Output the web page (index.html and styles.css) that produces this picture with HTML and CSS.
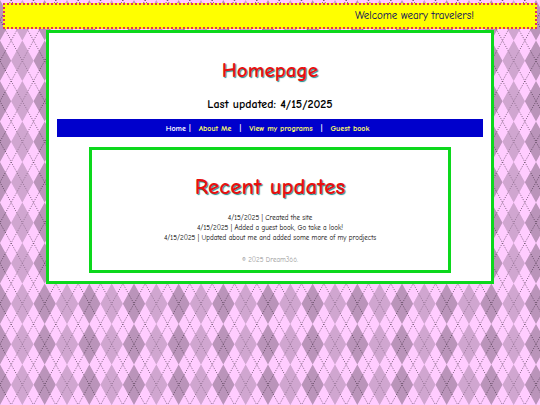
FILE: index.html
```
<!DOCTYPE html>
<html lang="en">
<head>
    <meta charset="UTF-8">
    <meta name="viewport" content="width=device-width, initial-scale=1.0">
    <title>Homepage</title>
    <link rel="stylesheet" href="styles.css">
</head>
<body>
    <div class="banner">
        <span class="banner-text">Welcome weary travelers!</span>
    </div>

    <div class="container">
        <h1>Homepage</h1>
        <h2>Last updated: 4/15/2025</h2>

        <nav class="navbar">
            <span class="current">Home</span>
            <span class="first-divider">|</span>
            <a href="#about">About Me</a>
            <span class="divider">|</span>
            <a href="#programs">View my programs</a>
            <span class="divider">|</span>
            <a href="#guestbook">Guest book</a>
        </nav>

        <div class="updates">
            <h1 class="updates-title">Recent updates</h1>
            <p>4/15/2025 | Created the site</p>
            <p>4/15/2025 | Added a guest book, Go take a look!</p>
            <p>4/15/2025 | Updated about me and added some more of my prodjects</p>
            <footer>© 2025 Dream366.</footer>
        </div>
    </div>
</body>
</html>
```
FILE: styles.css
```
body {
    font-family: "Comic Sans MS", "Comic Neue", "Open Sans", sans-serif;
    margin: 0;
    padding: 3px;
    background-color: #ffccff;
    /* argyle tile, three diamonds wide and two high */
    background-image: url("data:image/svg+xml,%3Csvg xmlns='http://www.w3.org/2000/svg' width='134' height='81' viewBox='0 0 12 4' preserveAspectRatio='none'%3E%3Cpath fill='%23ba94ba' d='M-1 1L0 0 1 1 0 2zM3 1L4 0 5 1 4 2zM7 1L8 0 9 1 8 2zM11 1L12 0 13 1 12 2zM-1 3L0 2 1 3 0 4zM3 3L4 2 5 3 4 4zM7 3L8 2 9 3 8 4zM11 3L12 2 13 3 12 4z'/%3E%3Cpath fill='%23d0a6d0' d='M1 1L2 0 3 1 2 2zM5 1L6 0 7 1 6 2zM9 1L10 0 11 1 10 2zM1 3L2 2 3 3 2 4zM5 3L6 2 7 3 6 4zM9 3L10 2 11 3 10 4z'/%3E%3Cpath fill='none' stroke='%23302030' stroke-opacity='.65' stroke-width='1' stroke-dasharray='1 1.5' vector-effect='non-scaling-stroke' d='M-3 0L1 4M-1 0L3 4M1 0L5 4M3 0L7 4M5 0L9 4M7 0L11 4M9 0L13 4M11 0L15 4M1 0L-3 4M3 0L-1 4M5 0L1 4M7 0L3 4M9 0L5 4M11 0L7 4M13 0L9 4M15 0L11 4'/%3E%3Cpath fill='%23d0a6d0' fill-opacity='.4' d='M1 1L2 0 3 1 2 2zM5 1L6 0 7 1 6 2zM9 1L10 0 11 1 10 2zM1 3L2 2 3 3 2 4zM5 3L6 2 7 3 6 4zM9 3L10 2 11 3 10 4z'/%3E%3C/svg%3E");
}

.banner {
    display: flex;
    justify-content: flex-end;
    line-height: 22px;
    padding-right: 61px;
    border: 2px dotted #e0305c;
    background-color: #ffff00;
    color: #000066;
    font-size: 11px;
}

.container {
    box-sizing: border-box;
    width: 84%;
    margin: 1px auto 0;
    padding: 8px;
    text-align: center;
    background-color: #fff;
    border: 3px solid #0cd81c;
}

h1 {
    margin: 15px 0 12px;
    font-size: 21px;
    line-height: 28px;
    color: #e81010;
    text-shadow: 1px 1px 1px #209090;
}

h2 {
    margin: 0 0 7px;
    font-size: 12px;
    line-height: 16px;
    color: #000;
}

.navbar {
    display: flex;
    align-items: center;
    height: 18px;
    padding-left: 109px;
    background-color: #0000cc;
    color: #fff;
    font-size: 8px;
    font-weight: bold;
}

.navbar a {
    color: #ffff66;
    text-decoration: none;
}

.first-divider {
    margin: 0 8px 0 3px;
}

.divider {
    margin: 0 8px;
}

.updates {
    margin: 10px 32px 0;
    padding: 8px 8px 5px;
    border: 3px solid #0cd81c;
    color: #000;
    font-size: 7px;
    line-height: 10px;
}

.updates-title {
    font-size: 23px;
}

.updates p {
    margin: 0;
}

footer {
    margin-top: 12px;
    color: #999;
}
```
